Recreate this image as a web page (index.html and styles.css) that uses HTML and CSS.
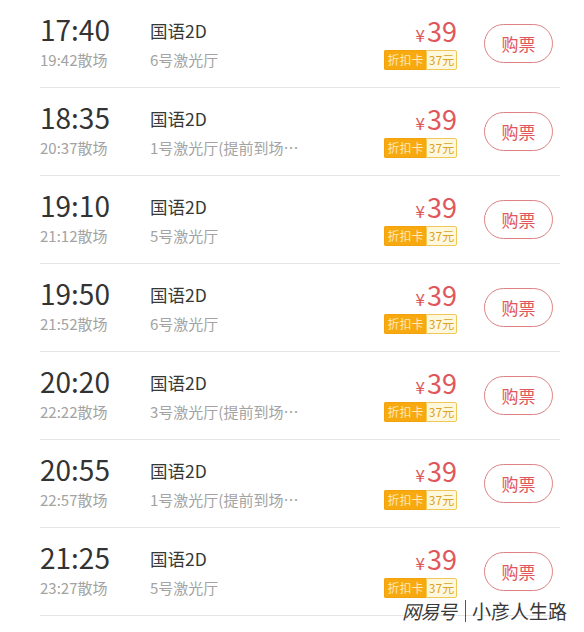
FILE: index.html
```html
<!DOCTYPE html>
<html lang="zh">
<head>
<meta charset="utf-8">
<link rel="stylesheet" href="styles.css">
</head>
<body>
<div class="page">
  <ul class="list">
    <li class="row">
      <div class="col-time"><div class="time">17:40</div><div class="sub">19:42散场</div></div>
      <div class="col-info"><div class="title">国语2D</div><div class="sub">6号激光厅</div></div>
      <div class="col-price"><div class="price"><span class="yen">¥</span>39</div><div class="badge"><span class="badge-l">折扣卡</span><span class="badge-r">37元</span></div></div>
      <div class="col-btn"><span class="btn">购票</span></div>
    </li>
    <li class="row">
      <div class="col-time"><div class="time">18:35</div><div class="sub">20:37散场</div></div>
      <div class="col-info"><div class="title">国语2D</div><div class="sub">1号激光厅(提前到场…</div></div>
      <div class="col-price"><div class="price"><span class="yen">¥</span>39</div><div class="badge"><span class="badge-l">折扣卡</span><span class="badge-r">37元</span></div></div>
      <div class="col-btn"><span class="btn">购票</span></div>
    </li>
    <li class="row">
      <div class="col-time"><div class="time">19:10</div><div class="sub">21:12散场</div></div>
      <div class="col-info"><div class="title">国语2D</div><div class="sub">5号激光厅</div></div>
      <div class="col-price"><div class="price"><span class="yen">¥</span>39</div><div class="badge"><span class="badge-l">折扣卡</span><span class="badge-r">37元</span></div></div>
      <div class="col-btn"><span class="btn">购票</span></div>
    </li>
    <li class="row">
      <div class="col-time"><div class="time">19:50</div><div class="sub">21:52散场</div></div>
      <div class="col-info"><div class="title">国语2D</div><div class="sub">6号激光厅</div></div>
      <div class="col-price"><div class="price"><span class="yen">¥</span>39</div><div class="badge"><span class="badge-l">折扣卡</span><span class="badge-r">37元</span></div></div>
      <div class="col-btn"><span class="btn">购票</span></div>
    </li>
    <li class="row">
      <div class="col-time"><div class="time">20:20</div><div class="sub">22:22散场</div></div>
      <div class="col-info"><div class="title">国语2D</div><div class="sub">3号激光厅(提前到场…</div></div>
      <div class="col-price"><div class="price"><span class="yen">¥</span>39</div><div class="badge"><span class="badge-l">折扣卡</span><span class="badge-r">37元</span></div></div>
      <div class="col-btn"><span class="btn">购票</span></div>
    </li>
    <li class="row">
      <div class="col-time"><div class="time">20:55</div><div class="sub">22:57散场</div></div>
      <div class="col-info"><div class="title">国语2D</div><div class="sub">1号激光厅(提前到场…</div></div>
      <div class="col-price"><div class="price"><span class="yen">¥</span>39</div><div class="badge"><span class="badge-l">折扣卡</span><span class="badge-r">37元</span></div></div>
      <div class="col-btn"><span class="btn">购票</span></div>
    </li>
    <li class="row">
      <div class="col-time"><div class="time">21:25</div><div class="sub">23:27散场</div></div>
      <div class="col-info"><div class="title">国语2D</div><div class="sub">5号激光厅</div></div>
      <div class="col-price"><div class="price"><span class="yen">¥</span>39</div><div class="badge"><span class="badge-l">折扣卡</span><span class="badge-r">37元</span></div></div>
      <div class="col-btn"><span class="btn">购票</span></div>
    </li>
  </ul>
  <div class="watermark"><span class="wm-logo">网易号</span><span class="wm-bar"></span><span class="wm-name">小彦人生路</span></div>
</div>
</body>
</html>
```

FILE: styles.css
```css
* { box-sizing: border-box; }
html, body { margin: 0; padding: 0; background: #fff; }
body {
  font-family: "Noto Sans CJK SC", "Noto Sans", sans-serif;
  width: 584px;
  height: 632px;
  overflow: hidden;
}
.page { position: relative; width: 584px; height: 632px; }
.list {
  list-style: none;
  margin: 0 24px 0 40px;
  padding: 0;
  border-top: 1px solid #ededed;
  margin-top: -1px;
}
.row {
  display: flex;
  height: 88px;
  border-bottom: 1px solid #e4e4e4;
}
.col-time { width: 110px; padding-top: 13px; }
.time {
  font-size: 28px;
  line-height: 32px;
  color: #333;
}
.sub {
  font-size: 15px;
  line-height: 20px;
  color: #a3a3a3;
  white-space: nowrap;
}
.col-time .sub { margin-top: 5px; }
.col-info { flex: 1; padding-top: 19px; }
.title {
  font-size: 17.5px;
  line-height: 24px;
  color: #383838;
}
.col-info .sub { margin-top: 7px; }
.col-price {
  display: flex;
  flex-direction: column;
  align-items: flex-end;
  padding-top: 16px;
}
.price {
  font-size: 27px;
  line-height: 30px;
  color: #e0575b;
}
.yen { font-size: 17px; margin-right: 2px; }
.badge {
  display: flex;
  height: 20px;
  margin-top: 0;
  font-size: 12px;
  line-height: 18px;
}
.badge-l {
  width: 42px;
  background: #f7a90f;
  color: #ffe9b8;
  text-align: center;
  border: 1px solid #f2a20a;
  border-right: none;
  border-radius: 2px 0 0 2px;
}
.badge-r {
  width: 31px;
  background: #fff8dc;
  color: #d9a22a;
  text-align: center;
  border: 1px solid #f0c85a;
  border-radius: 0 2px 2px 0;
}
.col-btn { padding: 24px 7px 0 27px; }
.btn {
  display: flex;
  align-items: center;
  justify-content: center;
  width: 69px;
  height: 39px;
  border: 1.5px solid #de8384;
  border-radius: 20px;
  font-size: 17px;
  color: #e0575b;
}
.watermark {
  position: absolute;
  left: 402px;
  top: 599px;
  display: flex;
  align-items: center;
  color: #3a3a3a;
  font-size: 19px;
  line-height: 25px;
  text-shadow: 0 0 2px #fff, 0 0 2px #fff;
}
.wm-logo { font-style: italic; letter-spacing: -1px; }
.wm-bar {
  width: 1px;
  height: 22px;
  background: #555;
  margin: 0 6px 0 9px;
}
.wm-name { letter-spacing: 0; }
```
